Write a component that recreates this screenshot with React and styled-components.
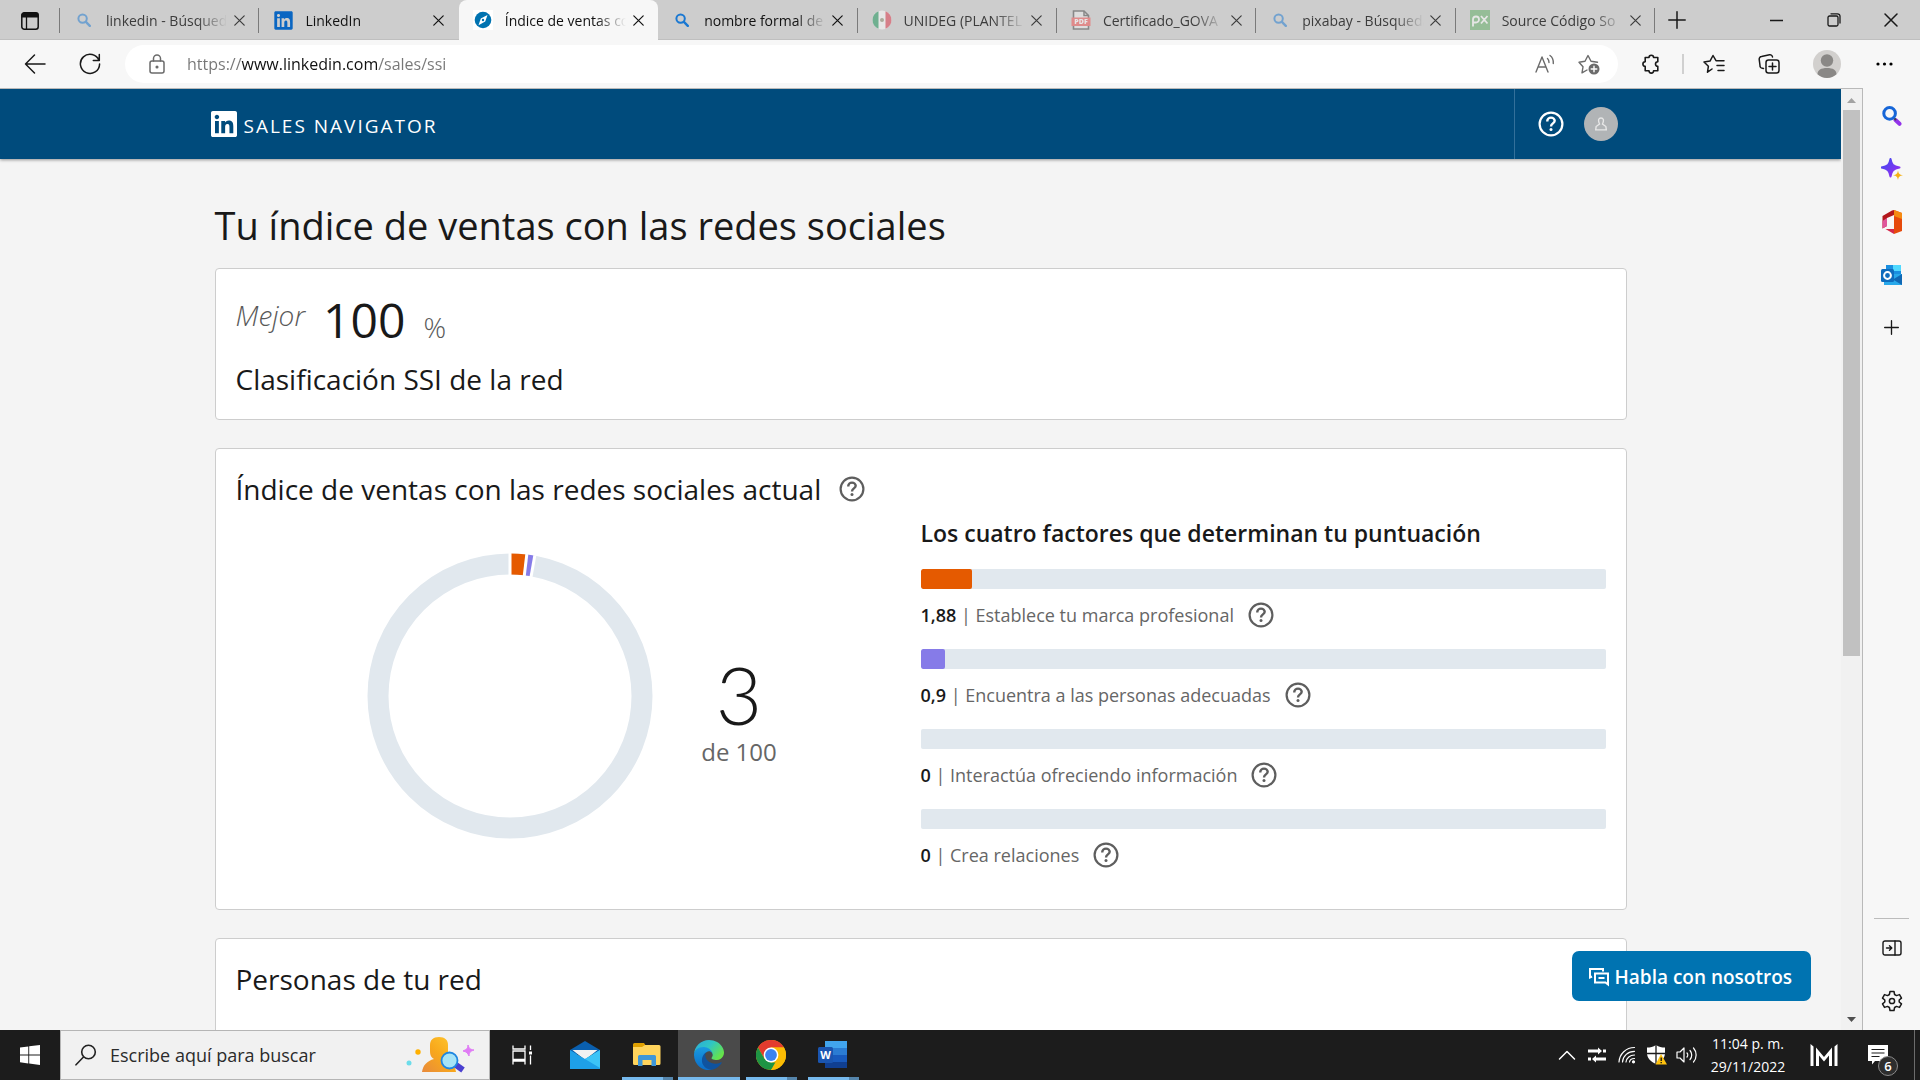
import React from "react";
import styled, { createGlobalStyle, css } from "styled-components";
import { FaLinkedin } from "react-icons/fa";

const GlobalStyle = createGlobalStyle`
  * {
    box-sizing: border-box;
  }
  body {
    margin: 0;
    font-family: "Open Sans", "Noto Sans", sans-serif;
    color: #191919;
    background: #f4f4f4;
  }
  h1, h2, h3, p {
    margin: 0;
    font-weight: 400;
  }
  svg {
    display: block;
    flex: none;
  }
`;

const plainButton = css`
  display: flex;
  align-items: center;
  justify-content: center;
  padding: 0;
  border: none;
  background: none;
  color: inherit;
  font-family: inherit;
  cursor: pointer;
`;

/* ---------- window ---------- */

const Window = styled.div`
  display: flex;
  flex-direction: column;
  height: 100vh;
  overflow: hidden;
`;

const IconButton = styled.button`
  ${plainButton}
  flex: none;
  width: ${props => props.$w || 32}px;
  height: ${props => props.$h || 32}px;
`;

/* ---------- tab strip ---------- */

const TabStrip = styled.div`
  display: flex;
  flex: none;
  height: 40px;
  background: #cdcdcd;
  box-shadow: inset 0 -1px 0 #bfbfbf;
`;

const Tabs = styled.div`
  display: flex;
  flex: 0 1 1595px;
  min-width: 0;
`;

const Tab = styled.div`
  display: flex;
  align-items: center;
  flex: 1 1 0;
  min-width: 0;
  height: 40px;
  padding: 0 8px 0 14px;
  position: relative;
  color: ${props => (props.$dim ? "#3c3c3c" : "#111")};
  ${props =>
    props.$active &&
    css`
      background: #f7f7f7;
      border-radius: 8px 8px 0 0;
    `}
  ${props =>
    props.$divider &&
    css`
      &::after {
        content: "";
        position: absolute;
        right: 0;
        top: 8px;
        width: 1px;
        height: 25px;
        background: #7a7a7a;
      }
    `}
`;

const TabListButton = styled(IconButton)`
  border-right: 1px solid #7a7a7a;
  height: 25px;
  margin-top: 8px;
`;

const TabTitle = styled.button`
  ${plainButton}
  justify-content: flex-start;
  flex: 1;
  min-width: 0;
  height: 40px;
  gap: 12px;
  font-size: 14px;
`;

const Favicon = styled.span`
  display: flex;
  align-items: center;
  justify-content: center;
  flex: none;
  width: 20px;
  opacity: ${props => (props.$dim ? 0.5 : 1)};
`;

const TabText = styled.span`
  flex: 1;
  min-width: 0;
  overflow: hidden;
  white-space: nowrap;
  text-align: left;
  mask-image: linear-gradient(to right, #000 calc(100% - 30px), transparent);
`;

const WindowButtons = styled.div`
  display: flex;
  margin-left: auto;
`;

/* ---------- toolbar ---------- */

const Toolbar = styled.div`
  display: flex;
  align-items: center;
  flex: none;
  height: 48px;
  padding-left: 12px;
  background: #f7f7f7;
`;

const AddressBar = styled.label`
  display: flex;
  align-items: center;
  flex: 1;
  min-width: 0;
  height: 38px;
  margin: 0 16px 0 2px;
  padding: 0 8px 0 16px;
  border-radius: 19px;
  background: #fff;
  color: #6b6b6b;
`;

const AddressInput = styled.input`
  flex: 1;
  min-width: 0;
  margin-left: 14px;
  padding: 0;
  border: none;
  outline: none;
  font-family: inherit;
  font-size: 16px;
  line-height: 24px;
  color: transparent;
  background: linear-gradient(to right, #767676 54px, #111 54px, #111 191px, #767676 191px);
  background-clip: text;
`;

const ToolDivider = styled.span`
  width: 2px;
  height: 20px;
  margin: 0 12px;
  background: #d0d0d0;
`;

/* ---------- body ---------- */

const Body = styled.div`
  display: flex;
  flex: 1;
  min-height: 0;
`;

const Page = styled.div`
  display: flex;
  flex-direction: column;
  flex: 1;
  min-width: 0;
  overflow: hidden;
  position: relative;
  border-top: 1px solid #b9b9b9;
  background: #f4f4f4;
`;

const ScrollTrack = styled.div`
  display: flex;
  flex-direction: column;
  flex: none;
  width: 22px;
  border-top: 1px solid #b9b9b9;
  border-right: 1px solid #b9b9b9;
  background: #f1f1f1;
`;

const ScrollThumb = styled.div`
  height: 58%;
  margin: 0 auto;
  width: 17px;
  background: #c1c1c1;
`;

const SideBar = styled.aside`
  display: flex;
  flex-direction: column;
  align-items: center;
  flex: none;
  width: 57px;
  padding: 1px 0 3px;
  background: #f7f7f7;
`;

const SideDivider = styled.hr`
  width: 35px;
  margin: auto 0 2px;
  border: none;
  border-top: 1px solid #bcbcbc;
`;

/* ---------- sales navigator ---------- */

const NavBar = styled.header`
  flex: none;
  padding: 0 20px;
  background: #004b7c;
  color: #fff;
  box-shadow: 0 1px 3px rgba(0, 0, 0, 0.4);
`;

const NavInner = styled.div`
  display: flex;
  justify-content: space-between;
  max-width: 1420px;
  height: 70px;
  margin: 0 auto;
`;

const Brand = styled.a`
  display: flex;
  align-items: center;
  gap: 7px;
  color: inherit;
  text-decoration: none;
  font-size: 19px;
  line-height: 24px;
  letter-spacing: 2px;
`;

const BrandName = styled.span`
  padding-top: 4px;
`;

const NavTools = styled.div`
  display: flex;
  align-items: center;
  gap: 20px;
  padding: 0 13px 0 23px;
  border-left: 1px solid #33709a;
`;

const NavAvatar = styled.button`
  ${plainButton}
  width: 34px;
  height: 34px;
  border-radius: 50%;
  background: #b1b4b6;
`;

const Content = styled.main`
  width: 100%;
  max-width: 1452px;
  margin: 0 auto;
  padding: 40px 20px;
`;

const PageTitle = styled.h1`
  margin-bottom: 17px;
  font-size: 38px;
  line-height: 52px;
`;

const Card = styled.section`
  min-height: ${props => props.$minHeight || 0}px;
  margin-bottom: 28px;
  padding: 20px;
  border: 1px solid #cdcdcd;
  border-radius: 4px;
  background: #fff;
`;

const CardTitle = styled.h2`
  display: flex;
  align-items: center;
  gap: 18px;
  font-size: 28px;
  line-height: 40px;
`;

const RankRow = styled.div`
  display: flex;
  align-items: baseline;
  gap: 18px;
  margin-bottom: 6px;
  line-height: 62px;
`;

const RankPrefix = styled.em`
  align-self: flex-start;
  font-size: 28px;
  font-weight: 300;
  line-height: 52px;
  color: #595959;
`;

const RankValue = styled.span`
  font-size: 48px;
`;

const RankUnit = styled.span`
  font-size: 28px;
  font-weight: 300;
  line-height: 52px;
  color: #595959;
`;

const Columns = styled.div`
  display: grid;
  grid-template-columns: 1fr 1fr;
  margin-top: 8px;
`;

const ScorePane = styled.div`
  display: flex;
  justify-content: center;
  align-items: center;
  gap: 48px;
  padding: 0 12px 14px 0;
`;

const Score = styled.div`
  padding-top: 28px;
  text-align: center;
`;

const ScoreValue = styled.div`
  font-family: Lato, "Open Sans", sans-serif;
  font-size: 80px;
  line-height: 84px;
  font-weight: 300;
`;

const ScoreTotal = styled.div`
  font-size: 24px;
  line-height: 32px;
  color: #666;
`;

const FactorsTitle = styled.h3`
  margin-bottom: 20px;
  font-size: 23px;
  line-height: 32px;
  font-weight: 600;
`;

const FactorList = styled.ul`
  margin: 0;
  padding: 0 0 18px;
  list-style: none;
`;

const Factor = styled.li`
  & + & {
    margin-top: 18px;
  }
`;

const Meter = styled.div`
  height: 20px;
  margin-bottom: 10px;
  border-radius: 2px;
  background: #e1e8ee;
  overflow: hidden;
`;

const MeterFill = styled.div`
  height: 20px;
  border-radius: 2px;
  background: ${props => props.$color};
`;

const FactorLabel = styled.p`
  display: flex;
  align-items: center;
  font-size: 18px;
  line-height: 32px;
  color: #666;
  white-space: pre;
`;

const FactorValue = styled.b`
  font-weight: 600;
  color: #191919;
`;

const HelpButton = styled.button`
  ${plainButton}
  color: ${props => props.$color || "#5e5e5e"};
  ${props => props.$spaced && "margin-left: 14px;"}
`;

const ChatButton = styled.button`
  ${plainButton}
  gap: 6px;
  position: absolute;
  right: 30px;
  bottom: 29px;
  height: 50px;
  padding: 2px 19px 0 17px;
  border-radius: 7px;
  background: #0073b1;
  color: #fff;
  font-size: 19px;
  font-weight: 600;
`;

/* ---------- taskbar ---------- */

const Taskbar = styled.footer`
  display: flex;
  flex: none;
  height: 50px;
  background: #1c1c1c;
  color: #fff;
`;

const StartButton = styled.button`
  ${plainButton}
  width: 60px;
`;

const TaskSearch = styled.label`
  display: flex;
  align-items: center;
  width: 430px;
  margin-right: 2px;
  padding: 0 14px;
  border: 1px solid #b5b5b5;
  background: #f1f1f1;
  color: #222;
`;

const TaskSearchInput = styled.input`
  flex: 1;
  min-width: 0;
  margin-left: 13px;
  padding: 0;
  border: none;
  outline: none;
  background: none;
  font-family: inherit;
  font-size: 18px;
  color: #222;
  &::placeholder {
    color: #2b2b2b;
    opacity: 1;
  }
`;

const TaskApp = styled.button`
  ${plainButton}
  position: relative;
  width: 62px;
  background: ${props => (props.$active ? "#4a4a4a" : "none")};
  &::after {
    content: "";
    position: absolute;
    left: ${props => (props.$active ? 0 : 6)}px;
    right: ${props => (props.$active ? 0 : 5)}px;
    bottom: 0;
    height: 3px;
    background: ${props =>
      props.$active ? "#76b9ed" : props.$open ? "linear-gradient(to right, #76b9ed 80%, #5585ab 80%)" : "none"};
  }
`;

const Tray = styled.div`
  display: flex;
  align-items: center;
  margin-left: auto;
  border-right: 1px solid #6c6c6c;
  margin-right: 5px;
`;

const Clock = styled.time`
  width: 92px;
  text-align: center;
  font-size: 14px;
  line-height: 23px;
`;

const Notifications = styled(IconButton)`
  position: relative;
  margin: 0 20px 0 8px;
`;

const Badge = styled.span`
  position: absolute;
  left: 16px;
  top: 17px;
  width: 20px;
  height: 20px;
  border: 1px solid #8a8a8a;
  border-radius: 50%;
  background: #2e2e2e;
  font-size: 13px;
  font-weight: 600;
  line-height: 18px;
  text-align: center;
`;

/* ---------- icons ---------- */

const Stroke = ({ w = 24, h = w, box = `0 0 ${w} ${h}`, width = 1.4, children }) => (
  <svg
    width={w}
    height={h}
    viewBox={box}
    fill="none"
    stroke="currentColor"
    strokeWidth={width}
    strokeLinecap="round"
    strokeLinejoin="round"
    aria-hidden="true"
  >
    {children}
  </svg>
);

const HelpIcon = ({ size = 26 }) => (
  <svg width={size} height={size} viewBox="0 0 26 26" fill="none" stroke="currentColor" aria-hidden="true">
    <circle cx="13" cy="13" r="11.4" strokeWidth="2.2" />
    <path d="M9.3 10.4V9.8a3.7 3.2 0 0 1 7.4 0c0 2.4-3.6 2.7-3.6 5.2v.6" strokeWidth="2.4" />
    <circle cx="13" cy="18.6" r="1.5" fill="currentColor" stroke="none" />
  </svg>
);

const CloseIcon = ({ size = 11 }) => (
  <Stroke w={size} box="0 0 11 11" width={1.2}>
    <path d="M.8.8l9.4 9.4M10.2.8L.8 10.2" />
  </Stroke>
);

const TabListIcon = () => (
  <svg width="20" height="20" viewBox="0 0 20 20" aria-hidden="true">
    <rect x="1.8" y="1.8" width="16.4" height="16.4" rx="2.5" fill="none" stroke="#111" strokeWidth="1.5" />
    <path d="M1.5 6.5V4A2.5 2.5 0 0 1 4 1.5h12A2.5 2.5 0 0 1 18.5 4v2.5z" fill="#111" />
    <path d="M6.5 6v12" stroke="#111" strokeWidth="1.3" />
  </svg>
);

const BingIcon = () => (
  <Stroke w={14} width={2}>
    <circle cx="5.6" cy="5.6" r="4.2" stroke="#1a78d2" />
    <path d="M8.9 8.9l3.9 3.9" stroke="#1a78d2" strokeWidth="2.4" />
  </Stroke>
);

const CompassIcon = () => (
  <svg width="20" height="20" viewBox="0 0 20 20" aria-hidden="true">
    <path d="M0 0h20v20H0z" fill="#fff" />
    <circle cx="10" cy="10" r="8.3" fill="#0073b1" />
    <path d="M14.5 5l-2.3 6.600-6.700 3.600 2.300-6.700z" fill="#fff" />
    <circle cx="10" cy="10" r="1.2" fill="#0073b1" />
  </svg>
);

const MexicoIcon = () => (
  <svg width="20" height="20" viewBox="0 0 20 20" aria-hidden="true">
    <circle cx="10" cy="10" r="9.5" fill="#fff" />
    <path d="M6.5 1.2a9.5 9.5 0 0 0 0 17.600z" fill="#139354" />
    <path d="M13.5 1.2a9.5 9.5 0 0 1 0 17.600z" fill="#e03447" />
    <circle cx="10" cy="10" r="2" fill="#8a8a6a" />
  </svg>
);

const PdfIcon = () => (
  <svg width="20" height="20" viewBox="0 0 20 20" aria-hidden="true">
    <path d="M2.5 1h10.5l4.5 4.5V19h-15z" fill="#eee" stroke="#444" strokeWidth="1.6" />
    <path d="M13 1v4.5h4.5" fill="none" stroke="#444" strokeWidth="1.5" />
    <path d="M.5 7.5h19v8.5H.5z" fill="#f24b4b" />
    <text x="10" y="14.3" textAnchor="middle" fontSize="7" fontWeight="800" fill="#fff">
      PDF
    </text>
  </svg>
);

const PixabayIcon = () => (
  <svg width="20" height="20" viewBox="0 0 20 20" aria-hidden="true">
    <path d="M0 0h20v20H0z" fill="#5fae62" />
    <path
      d="M3 16.5V9.5a3 3 0 1 1 3 3H3M11 6l6.5 7.5M17.500 6L11 13.5"
      fill="none"
      stroke="#fff"
      strokeWidth="1.8"
    />
  </svg>
);

const PlusIcon = ({ size = 18, width = 1.5 }) => (
  <Stroke w={size} box="0 0 18 18" width={width}>
    <path d="M9 .8v16.400M.8 9h16.400" />
  </Stroke>
);

const BackIcon = () => (
  <Stroke w={22} width={1.5}>
    <path d="M21 11H1.500M10.500 2L1.500 11l9 9" />
  </Stroke>
);

const ReloadIcon = () => (
  <Stroke w={22} width={1.5}>
    <path d="M20 7.500A9.600 9.600 0 1 0 20.600 11M20.300 1.500v6h-6" />
  </Stroke>
);

const LockIcon = () => (
  <Stroke w={16} h={20} width={1.5}>
    <rect x="1" y="7" width="14" height="12" rx="2" />
    <path d="M4.500 7V4.500a3.500 3.500 0 0 1 7 0V7" />
    <circle cx="8" cy="13" r=".8" fill="currentColor" />
  </Stroke>
);

const ReadAloudIcon = () => (
  <Stroke w={20} width={1.4}>
    <path d="M1 18L7 3l6 15M3 13h8M12.500 4.500c1 .9 1.500 2.200 1.500 4M15 1.500c2.500 1.800 3.500 4.500 3.300 8" />
  </Stroke>
);

const StarAddIcon = () => (
  <Stroke w={22} width={1.4}>
    <path d="M9 17l-5 2.800 1-6L1 9.200l6-.9L10 2.500l3 5.800 6.500.9" />
    <circle cx="16" cy="16" r="5.500" fill="#6b6b6b" stroke="none" />
    <path d="M16 13.200v5.600M13.200 16h5.600" stroke="#fff" />
  </Stroke>
);

const PuzzleIcon = () => (
  <Stroke w={20} width={1.6}>
    <path d="M7 3.500a2.300 2.300 0 0 1 4.600 0h4.200v4.300a2.300 2.300 0 1 0 0 4.600v4.400h-4.200a2.300 2.300 0 0 1-4.600 0H3.200v-4.400a2.300 2.300 0 0 1 0-4.600V3.500z" />
  </Stroke>
);

const FavoritesIcon = () => (
  <Stroke w={22} width={1.5}>
    <path d="M9 16l-4.500 3.200.9-6L1 9l6-.9 3-5.600 3 5.200h8M14 12.500h7M15 17.500h6" />
  </Stroke>
);

const CollectionsIcon = () => (
  <Stroke w={22} width={1.5}>
    <rect x="8" y="7" width="13" height="13" rx="2.500" />
    <path d="M14.500 10v7M11 13.500h7M5.500 15.500l-1.200-.2A2.500 2.500 0 0 1 2 12.500l-.8-6.200A2.500 2.500 0 0 1 3.500 3.500l8-1.700A2.500 2.500 0 0 1 14.500 4" />
  </Stroke>
);

const ProfileIcon = () => (
  <svg width="28" height="28" viewBox="0 0 28 28" aria-hidden="true">
    <circle cx="14" cy="14" r="14" fill="#d2d0ce" />
    <circle cx="14" cy="10.500" r="6.200" fill="#8a8886" />
    <path d="M4.500 24.300C4.500 20 8 18 14 18s9.500 2 9.500 6.300A14 14 0 0 1 14 28a14 14 0 0 1-9.500-3.700z" fill="#8a8886" />
  </svg>
);

const DotsIcon = () => (
  <svg width="17" height="4" viewBox="0 0 17 4" aria-hidden="true">
    <circle cx="2" cy="2" r="1.600" />
    <circle cx="8.500" cy="2" r="1.600" />
    <circle cx="15" cy="2" r="1.600" />
  </svg>
);

const MinimizeIcon = () => (
  <Stroke w={13} width={1.3}>
    <path d="M0 6.500h13" />
  </Stroke>
);

const RestoreIcon = () => (
  <Stroke w={14} width={1.3}>
    <rect x="1" y="3" width="10" height="10" rx="1.500" />
    <path d="M4 .8h6.500a2.500 2.500 0 0 1 2.500 2.500V10" />
  </Stroke>
);

const SideSearchIcon = () => (
  <svg width="20" height="20" viewBox="0 0 20 20" fill="none" strokeLinecap="round" aria-hidden="true">
    <path d="M13.500 14l4 3.800" stroke="#9333ea" strokeWidth="4" />
    <path d="M11.500 11.500l2 2" stroke="#444" strokeWidth="2" />
    <circle cx="7.600" cy="7.400" r="5.800" stroke="#1666d8" strokeWidth="3" />
  </svg>
);

const SparkleIcon = () => (
  <svg width="22" height="22" viewBox="0 0 22 22" aria-hidden="true">
    <defs>
      <linearGradient id="sparkle" x1="0" y1="0" x2="1" y2="1">
        <stop offset="0" stopColor="#3b4bf0" />
        <stop offset="1" stopColor="#a02bf0" />
      </linearGradient>
    </defs>
    <path
      d="M9.500 1c1 5.500 2.500 7.500 9 8.500-6.500 1-8 3.500-9 9-1-5.500-2.500-8-9-9 6.500-1 8-3 9-8.500z"
      fill="url(#sparkle)"
      stroke="url(#sparkle)"
      strokeWidth="2"
      strokeLinejoin="round"
    />
    <path d="M17 12.500c.6 3 1.300 4 5 4.800-3.700.7-4.400 1.700-5 4.700-.6-3-1.300-4-5-4.700 3.700-.8 4.400-1.800 5-4.800z" fill="#f5b014" />
  </svg>
);

const OfficeIcon = () => (
  <svg width="22" height="24" viewBox="0 0 22 24" aria-hidden="true">
    <path d="M13 0l8 3v18l-8 3z" fill="#e64a0c" />
    <path d="M13 0l8 3v6l-8-3z" fill="#f58a12" />
    <path d="M13 0v5L6 8v8l-4.500 2.500V6L11 .5z" fill="#b3171b" />
    <path d="M6 8v8l-4.500 2.500V11z" fill="#e0559b" />
    <path d="M4.500 19h8.500v5z" fill="#d5284a" />
  </svg>
);

const OutlookIcon = () => (
  <svg width="22" height="22" viewBox="0 0 22 22" aria-hidden="true">
    <path d="M5 1h15v12H5z" fill="#1a8fe0" />
    <path d="M12 1h8v6h-8z" fill="#50d9ff" />
    <path d="M3 10h18v11H3z" fill="#28a8ea" />
    <path d="M21 10v11l-9-5.500z" fill="#1068b4" />
    <rect x="0" y="5" width="13" height="13" rx="1.500" fill="#0f6cbd" />
    <circle cx="6.500" cy="11.500" r="3.400" fill="none" stroke="#fff" strokeWidth="2" />
  </svg>
);

const PanelIcon = () => (
  <Stroke w={20} h={16} width={1.4}>
    <rect x="1" y="1" width="18" height="14" rx="2" />
    <path d="M13 1v14M4.500 8h5M7.500 5.800L9.800 8l-2.300 2.200" />
  </Stroke>
);

const GearIcon = () => (
  <Stroke w={22} width={1.5}>
    <path d="M9 1.500h4l.6 3 1.900 1.100 3-1 2 3.500L18.200 10v2l2.300 1.900-2 3.500-3-1-1.900 1.100-.6 3H9l-.6-3-1.900-1.100-3 1-2-3.500L3.800 12v-2L1.500 8.100l2-3.500 3 1 1.900-1.100z" />
    <circle cx="11" cy="11" r="2.600" />
  </Stroke>
);

const PersonIcon = () => (
  <svg width="12" height="14" viewBox="0 0 14 16" fill="none" stroke="#e8e8e8" strokeWidth="1.600" aria-hidden="true">
    <path d="M5.300 8C3 3 4.500 1 7 1s4 2 1.700 7l4 3 .5 3.800H.8l.5-3.800z" />
  </svg>
);

const ChatIcon = () => (
  <svg width="20" height="20" viewBox="0 0 20 20" fill="none" stroke="#fff" strokeWidth="2" aria-hidden="true">
    <path d="M14 4.500V2H1v8.500l2-1" />
    <path d="M6 6.500h13v11l-2.500-2H6zM9.500 11h6" />
  </svg>
);

const WindowsIcon = () => (
  <svg width="20" height="20" viewBox="0 0 20 20" fill="#fff" aria-hidden="true">
    <path d="M0 2.600L8.300 1.500v8H0zM9.200 1.300L20 0v9.500H9.200zM0 10.400h8.300v8L0 17.300zM9.200 10.400H20V20L9.200 18.600z" />
  </svg>
);

const LensIcon = () => (
  <Stroke w={22} width={1.6}>
    <circle cx="13.500" cy="8" r="6.800" />
    <path d="M8.500 13L1 20.800" />
  </Stroke>
);

const SearchArt = () => (
  <svg width="70" height="38" viewBox="0 0 70 38" aria-hidden="true">
    <defs>
      <linearGradient id="person" x1="0" y1="1" x2="1" y2="0">
        <stop offset="0" stopColor="#e88a3c" />
        <stop offset=".5" stopColor="#f8a81c" />
        <stop offset="1" stopColor="#ffc930" />
      </linearGradient>
    </defs>
    <circle cx="4" cy="27" r="2.500" fill="#6cdcea" />
    <circle cx="13" cy="16" r="2.700" fill="#ffb000" />
    <path d="M25 9c0-5 3-8 9-8s9 3 9 8v6c0 5-2 7-4 8 7 2 11 6 12 13H17c1-7 5-11 12-13-2-1-4-3-4-8z" fill="url(#person)" />
    <path d="M51 29l7 5" stroke="#4a3fd0" strokeWidth="6" />
    <circle cx="44.500" cy="24.500" r="8" fill="#a6e3f7" stroke="#1f86e0" strokeWidth="1.800" />
    <path d="M63 9c1.500 4 1.500 4 6 5-4 1.500-4.500 2-5 6-1.500-3-2-4-6-5 4-2 4.500-2 5-6z" fill="#e07bf5" stroke="#e07bf5" />
  </svg>
);

const TaskViewIcon = () => (
  <svg width="22" height="20" viewBox="0 0 22 20" fill="none" stroke="#fff" strokeWidth="1.300" aria-hidden="true">
    <path d="M1 .5V4h12V.5M1 19.500V16h12v3.500M1 6h12v8.500H1zM18.500.5v4.500M18.500 10.500v9" />
    <path d="M17 6.500h3v3h-3z" fill="#fff" stroke="none" />
  </svg>
);

const MailIcon = () => (
  <svg width="30" height="28" viewBox="0 0 30 28" aria-hidden="true">
    <path d="M0 9L15 0l15 9v4H0z" fill="#0a5fae" />
    <path d="M2.500 9h25L15 19z" fill="#f2f2f2" />
    <path d="M0 9l15 9L30 9v19H0z" fill="#1ea0e8" />
    <path d="M15 18L30 9v18z" fill="#3cc4f7" />
  </svg>
);

const FolderIcon = () => (
  <svg width="28" height="24" viewBox="0 0 28 24" aria-hidden="true">
    <path d="M0 1.500A1.500 1.500 0 0 1 1.500 0H11l2 3v2H0z" fill="#e0a000" />
    <path d="M0 4h9l3-2h14a1.500 1.500 0 0 1 1.500 1.500v17A1.500 1.500 0 0 1 26 22H1.500A1.500 1.500 0 0 1 0 20.500z" fill="#ffd45c" />
    <path d="M5 23v-9.500A1.500 1.500 0 0 1 6.500 12h15a1.500 1.500 0 0 1 1.500 1.500V23h-4.500v-6h-9v6z" fill="#3f97d8" />
  </svg>
);

const EdgeIcon = () => (
  <svg width="30" height="30" viewBox="0 0 256 256" aria-hidden="true">
    <defs>
      <linearGradient id="edgeTop" x1="0" y1="0" x2="1" y2=".6">
        <stop offset="0" stopColor="#2aa9dc" />
        <stop offset=".5" stopColor="#2fc5c5" />
        <stop offset="1" stopColor="#66e34a" />
      </linearGradient>
      <linearGradient id="edgeMid" x1="0" y1="0" x2="0" y2="1">
        <stop offset="0" stopColor="#1b9de2" />
        <stop offset="1" stopColor="#0a6cc8" />
      </linearGradient>
    </defs>
    <path
      d="M231.1 190.5c-3.4 1.8-6.9 3.4-10.5 4.7-11.5 4.3-23.7 6.5-36 6.5-47.5 0-88.8-32.7-88.8-74.6 0-11.5 6.4-21.9 16.4-27.4-42.9 1.8-54 46.5-54 72.7 0 74 68.2 81.6 82.9 81.6 7.9 0 19.9-2.3 27-4.6l1.3-.4c27.6-9.5 51-28.1 66.6-52.8 1.2-1.9.6-4.3-1.2-5.5-1.1-.7-2.5-.8-3.7-.2z"
      fill="#0f539f"
    />
    <path
      d="M105.7 241.4c-8.9-5.5-16.7-12.8-22.8-21.3-26.3-36-18.4-86.5 17.6-112.8 3.8-2.7 7.7-5.2 11.9-7.2 3.1-1.5 8.4-4.1 15.5-4 10.1.1 19.6 4.9 25.7 13 4 5.4 6.3 11.9 6.4 18.7 0-.2 24.5-79.6-80-79.6-43.9 0-80 41.7-80 78.2-.2 19.3 4 38.5 12.1 56 27.6 58.8 94.8 87.6 156.4 67.1-21.1 6.6-44.1 3.7-62.8-8.1z"
      fill="url(#edgeMid)"
    />
    <path
      d="M152.3 148.9c-.8 1-3.3 2.5-3.3 5.7 0 2.6 1.7 5.1 4.7 7.2 14.4 10 41.5 8.7 41.6 8.7 10.7 0 21.1-2.9 30.3-8.3 18.8-11 30.4-31.1 30.4-52.9.3-22.4-8-37.3-11.3-43.9C223.5 23.9 177.7 0 128 0 58 0 1 56.2 0 126.2c.5-36.5 36.8-66 80-66 3.5 0 23.5.3 42 10.1 16.3 8.6 24.9 18.9 30.8 29.2 6.2 10.7 7.3 24.1 7.3 29.5s-2.7 13.3-7.8 19.9z"
      fill="url(#edgeTop)"
    />
  </svg>
);

const ChromeIcon = () => (
  <svg width="30" height="30" viewBox="0 0 30 30" aria-hidden="true">
    <circle cx="15" cy="15" r="15" fill="#fbbc04" />
    <path d="M2 7.500A15 15 0 0 1 28 7.500H15L8.500 18.800z" fill="#e33b2e" />
    <path d="M2 7.500L8.500 18.800 15 22.500h6.500L15 30A15 15 0 0 1 2 7.500z" fill="#1e9444" />
    <path d="M21.500 18.800L15 30h1a15 15 0 0 0 12-22.500H15z" fill="#fbbc04" />
    <circle cx="15" cy="15" r="7.400" fill="#fff" />
    <circle cx="15" cy="15" r="5.900" fill="#3b82f0" />
  </svg>
);

const WordIcon = () => (
  <svg width="30" height="28" viewBox="0 0 30 28" aria-hidden="true">
    <path d="M7 0h22v7H7z" fill="#41a5ee" />
    <path d="M7 7h22v7H7z" fill="#2b7cd3" />
    <path d="M7 14h22v7H7z" fill="#185abd" />
    <path d="M7 21h22v6H7z" fill="#103f91" />
    <rect x="0" y="6" width="15" height="16" rx="1.500" fill="#1a55b0" />
    <text x="7.500" y="18.300" textAnchor="middle" fontSize="11" fontWeight="700" fill="#fff">
      W
    </text>
  </svg>
);

const ChevronUpIcon = () => (
  <Stroke w={18} width={1.5}>
    <path d="M1.500 13L9 5.500l7.500 7.500" />
  </Stroke>
);

const SwapIcon = () => (
  <svg width="18" height="16" viewBox="0 0 18 16" fill="#fff" aria-hidden="true">
    <path d="M0 2.500h10V.5L14 4l-4 3.500V5.500H0zM15 2.500h3v3h-3zM18 10.500H8V8.500L4 12l4 3.500V13.500h10zM0 10.500h3v3H0z" />
  </svg>
);

const WifiIcon = () => (
  <Stroke w={18} width={1.2}>
    <path d="M1 16C1.500 8 8 1.500 16.500 1.500M4.500 16C5 10 10 5.300 16.500 5.300M8 16c.5-4 4-7 8.500-7M11.500 16c.3-2 2-3.500 5-3.500" />
    <circle cx="15.500" cy="15.800" r="1" fill="#fff" />
  </Stroke>
);

const ShieldIcon = () => (
  <svg width="20" height="20" viewBox="0 0 20 20" aria-hidden="true">
    <path d="M9 0c3 2 5.500 2.500 9 2.500V8c0 5-3.500 8.500-9 11-5.500-2.500-9-6-9-11V2.500C3.500 2.500 6 2 9 0z" fill="#fff" />
    <path d="M9 0v19M0 8.500h18" stroke="#1c1c1c" strokeWidth="1.300" />
    <path d="M14 9l6 10.500H8.500z" fill="#ffc20e" />
    <path d="M14.200 12.500v3.500M14.200 17v1.300" stroke="#111" strokeWidth="1.300" />
  </svg>
);

const SpeakerIcon = () => (
  <Stroke w={22} h={18} width={1.2}>
    <path d="M1 6h3l4-4v14l-4-4H1zM11 7c1 1 1 3 0 4M14 4.500c2.300 2.500 2.300 6.500 0 9M17.500 2c3.500 4 3.500 10 0 14" />
  </Stroke>
);

const MonitorIcon = () => (
  <svg width="28" height="22" viewBox="0 0 28 22" fill="#fff" aria-hidden="true">
    <path d="M.5 0l3 2.500V22h-3zM27.500 0l-3 2.500V22h3zM6 3.500l8 9.500 8-9.500V22h-3V11.500L14 17.500 9 11.500V22H6z" />
  </svg>
);

const MessageIcon = () => (
  <svg width="20" height="20" viewBox="0 0 20 20" aria-hidden="true">
    <path d="M0 0h20v16H7l-3 3.500V16H0z" fill="#fff" />
    <path d="M3.500 4.500h13M3.500 8h13M3.500 11.500h8" stroke="#1c1c1c" strokeWidth="1.200" />
  </svg>
);

/* ---------- data ---------- */

const tabs = [
  { title: "linkedin - Búsqueda", icon: <BingIcon />, dim: true, divider: true },
  { title: "LinkedIn", icon: <FaLinkedin size={21} color="#0a66c2" /> },
  { title: "Índice de ventas con las redes", icon: <CompassIcon />, active: true },
  { title: "nombre formal de", icon: <BingIcon />, divider: true },
  { title: "UNIDEG (PLANTEL", icon: <MexicoIcon />, dim: true, divider: true },
  { title: "Certificado_GOVA", icon: <PdfIcon />, dim: true, divider: true },
  { title: "pixabay - Búsqueda", icon: <BingIcon />, dim: true, divider: true },
  { title: "Source Código So", icon: <PixabayIcon />, dim: true, divider: true }
];

const factors = [
  { value: 1.88, text: "1,88", label: "Establece tu marca profesional", color: "#e55a00" },
  { value: 0.9, text: "0,9", label: "Encuentra a las personas adecuadas", color: "#867be8" },
  { value: 0, text: "0", label: "Interactúa ofreciendo información", color: "#00a0dc" },
  { value: 0, text: "0", label: "Crea relaciones", color: "#dc4b89" }
];

const MAX_PER_FACTOR = 25;

const sideApps = [
  { name: "Buscar", icon: <SideSearchIcon /> },
  { name: "Descubrir", icon: <SparkleIcon /> },
  { name: "Office", icon: <OfficeIcon /> },
  { name: "Outlook", icon: <OutlookIcon /> },
  { name: "Agregar", icon: <PlusIcon size={15} width={1.6} /> }
];

const taskApps = [
  { name: "Vista de tareas", icon: <TaskViewIcon /> },
  { name: "Correo", icon: <MailIcon /> },
  { name: "Explorador", icon: <FolderIcon />, open: true },
  { name: "Edge", icon: <EdgeIcon />, active: true },
  { name: "Chrome", icon: <ChromeIcon />, open: true },
  { name: "Word", icon: <WordIcon />, open: true }
];

/* ---------- parts ---------- */

function ScoreRing({ items }) {
  const radius = 132;
  const length = 2 * Math.PI * radius;
  let total = 0;
  const slices = items
    .filter(item => item.value > 0)
    .map(item => {
      const start = total;
      total += item.value;
      return { ...item, start, end: total };
    });

  return (
    <svg width="286" height="286" viewBox="-143 -143 286 286" role="img" aria-label="3 de 100">
      <g transform="rotate(-90)" fill="none" strokeWidth="21">
        <circle r={radius} stroke="#e1e8ee" />
        {slices.map(slice => (
          <circle
            key={slice.label}
            r={radius}
            stroke={slice.color}
            strokeDasharray={`${(slice.value / 100) * length} ${length}`}
            strokeDashoffset={(-slice.start / 100) * length}
          />
        ))}
      </g>
      {[0, ...slices.map(slice => slice.end)].map(at => (
        <path key={at} d="M0-118V-143" stroke="#fff" strokeWidth="3" transform={`rotate(${at * 3.6})`} />
      ))}
    </svg>
  );
}

function BrowserTab({ title, icon, dim, active, divider }) {
  return (
    <Tab $dim={dim} $active={active} $divider={divider}>
      <TabTitle>
        <Favicon $dim={dim}>{icon}</Favicon>
        <TabText>{title}</TabText>
      </TabTitle>
      <IconButton $w={24} $h={24} aria-label="Cerrar pestaña">
        <CloseIcon />
      </IconButton>
    </Tab>
  );
}

function FactorRow({ value, text, label, color }) {
  return (
    <Factor>
      <Meter>
        <MeterFill $color={color} style={{ width: `${(value / MAX_PER_FACTOR) * 100}%` }} />
      </Meter>
      <FactorLabel>
        <FactorValue>{text}</FactorValue>
        {` | ${label}`}
        <HelpButton $spaced aria-label={`Ayuda: ${label}`}>
          <HelpIcon />
        </HelpButton>
      </FactorLabel>
    </Factor>
  );
}

function SalesPage() {
  return (
    <Page>
      <NavBar>
        <NavInner>
          <Brand href="#">
            <FaLinkedin size={30} style={{ width: 26 }} />
            <BrandName>SALES NAVIGATOR</BrandName>
          </Brand>
          <NavTools>
            <HelpButton $color="#fff" aria-label="Ayuda">
              <HelpIcon />
            </HelpButton>
            <NavAvatar aria-label="Perfil">
              <PersonIcon />
            </NavAvatar>
          </NavTools>
        </NavInner>
      </NavBar>
      <Content>
        <PageTitle>Tu índice de ventas con las redes sociales</PageTitle>
        <Card>
          <RankRow>
            <RankPrefix>Mejor</RankPrefix>
            <RankValue>100</RankValue>
            <RankUnit>%</RankUnit>
          </RankRow>
          <CardTitle>Clasificación SSI de la red</CardTitle>
        </Card>
        <Card>
          <CardTitle>
            Índice de ventas con las redes sociales actual
            <HelpButton aria-label="Ayuda: índice">
              <HelpIcon />
            </HelpButton>
          </CardTitle>
          <Columns>
            <ScorePane>
              <ScoreRing items={factors} />
              <Score>
                <ScoreValue>3</ScoreValue>
                <ScoreTotal>de 100</ScoreTotal>
              </Score>
            </ScorePane>
            <div>
              <FactorsTitle>Los cuatro factores que determinan tu puntuación</FactorsTitle>
              <FactorList>
                {factors.map(factor => (
                  <FactorRow key={factor.label} {...factor} />
                ))}
              </FactorList>
            </div>
          </Columns>
        </Card>
        <Card $minHeight={320}>
          <CardTitle>Personas de tu red</CardTitle>
        </Card>
      </Content>
      <ChatButton>
        <ChatIcon />
        Habla con nosotros
      </ChatButton>
    </Page>
  );
}

export default function App() {
  return (
    <Window>
      <GlobalStyle />
      <TabStrip>
        <TabListButton $w={60} aria-label="Pestañas">
          <TabListIcon />
        </TabListButton>
        <Tabs>
          {tabs.map(tab => (
            <BrowserTab key={tab.title} {...tab} />
          ))}
        </Tabs>
        <IconButton $w={44} $h={40} aria-label="Nueva pestaña">
          <PlusIcon />
        </IconButton>
        <WindowButtons>
          <IconButton $w={57} $h={40} aria-label="Minimizar">
            <MinimizeIcon />
          </IconButton>
          <IconButton $w={57} $h={40} aria-label="Restaurar">
            <RestoreIcon />
          </IconButton>
          <IconButton $w={58} $h={40} aria-label="Cerrar">
            <CloseIcon size={14} />
          </IconButton>
        </WindowButtons>
      </TabStrip>
      <Toolbar>
        <IconButton $w={45} aria-label="Atrás">
          <BackIcon />
        </IconButton>
        <IconButton $w={66} aria-label="Actualizar">
          <ReloadIcon />
        </IconButton>
        <AddressBar>
          <IconButton aria-label="Información del sitio">
            <LockIcon />
          </IconButton>
          <AddressInput aria-label="Dirección" defaultValue="https://www.linkedin.com/sales/ssi" />
          <IconButton $w={46} aria-label="Leer en voz alta">
            <ReadAloudIcon />
          </IconButton>
          <IconButton $w={42} aria-label="Agregar a favoritos">
            <StarAddIcon />
          </IconButton>
        </AddressBar>
        <IconButton $w={36} aria-label="Extensiones">
          <PuzzleIcon />
        </IconButton>
        <ToolDivider />
        <IconButton $w={36} aria-label="Favoritos">
          <FavoritesIcon />
        </IconButton>
        <IconButton $w={74} aria-label="Colecciones">
          <CollectionsIcon />
        </IconButton>
        <IconButton $w={42} aria-label="Perfil">
          <ProfileIcon />
        </IconButton>
        <IconButton $w={72} aria-label="Más">
          <DotsIcon />
        </IconButton>
      </Toolbar>
      <Body>
        <SalesPage />
        <ScrollTrack aria-hidden="true">
          <svg width="21" height="21" viewBox="0 0 21 21">
            <path d="M6 14l4.500-5 4.500 5z" fill="#a3a3a3" />
          </svg>
          <ScrollThumb />
          <svg width="21" height="21" viewBox="0 0 21 21" style={{ marginTop: "auto" }}>
            <path d="M6 8l4.500 5L15 8z" fill="#505050" />
          </svg>
        </ScrollTrack>
        <SideBar>
          {sideApps.map(app => (
            <IconButton key={app.name} $w={57} $h={53} aria-label={app.name}>
              {app.icon}
            </IconButton>
          ))}
          <SideDivider />
          <IconButton $w={57} $h={53} aria-label="Ocultar barra">
            <PanelIcon />
          </IconButton>
          <IconButton $w={57} $h={53} aria-label="Configuración">
            <GearIcon />
          </IconButton>
        </SideBar>
      </Body>
      <Taskbar>
        <StartButton aria-label="Inicio">
          <WindowsIcon />
        </StartButton>
        <TaskSearch>
          <LensIcon />
          <TaskSearchInput placeholder="Escribe aquí para buscar" aria-label="Buscar" />
          <SearchArt />
        </TaskSearch>
        {taskApps.map(app => (
          <TaskApp key={app.name} $open={app.open} $active={app.active} aria-label={app.name}>
            {app.icon}
          </TaskApp>
        ))}
        <Tray>
          <IconButton $w={30} aria-label="Iconos ocultos">
            <ChevronUpIcon />
          </IconButton>
          <IconButton $w={30} aria-label="Transferencias">
            <SwapIcon />
          </IconButton>
          <IconButton $w={30} aria-label="Red">
            <WifiIcon />
          </IconButton>
          <IconButton $w={30} aria-label="Seguridad">
            <ShieldIcon />
          </IconButton>
          <IconButton $w={30} aria-label="Volumen">
            <SpeakerIcon />
          </IconButton>
          <Clock>
            11:04 p. m.
            <br />
            29/11/2022
          </Clock>
          <IconButton $w={60} aria-label="Monitor">
            <MonitorIcon />
          </IconButton>
          <Notifications aria-label="Notificaciones">
            <MessageIcon />
            <Badge>6</Badge>
          </Notifications>
        </Tray>
      </Taskbar>
    </Window>
  );
}
